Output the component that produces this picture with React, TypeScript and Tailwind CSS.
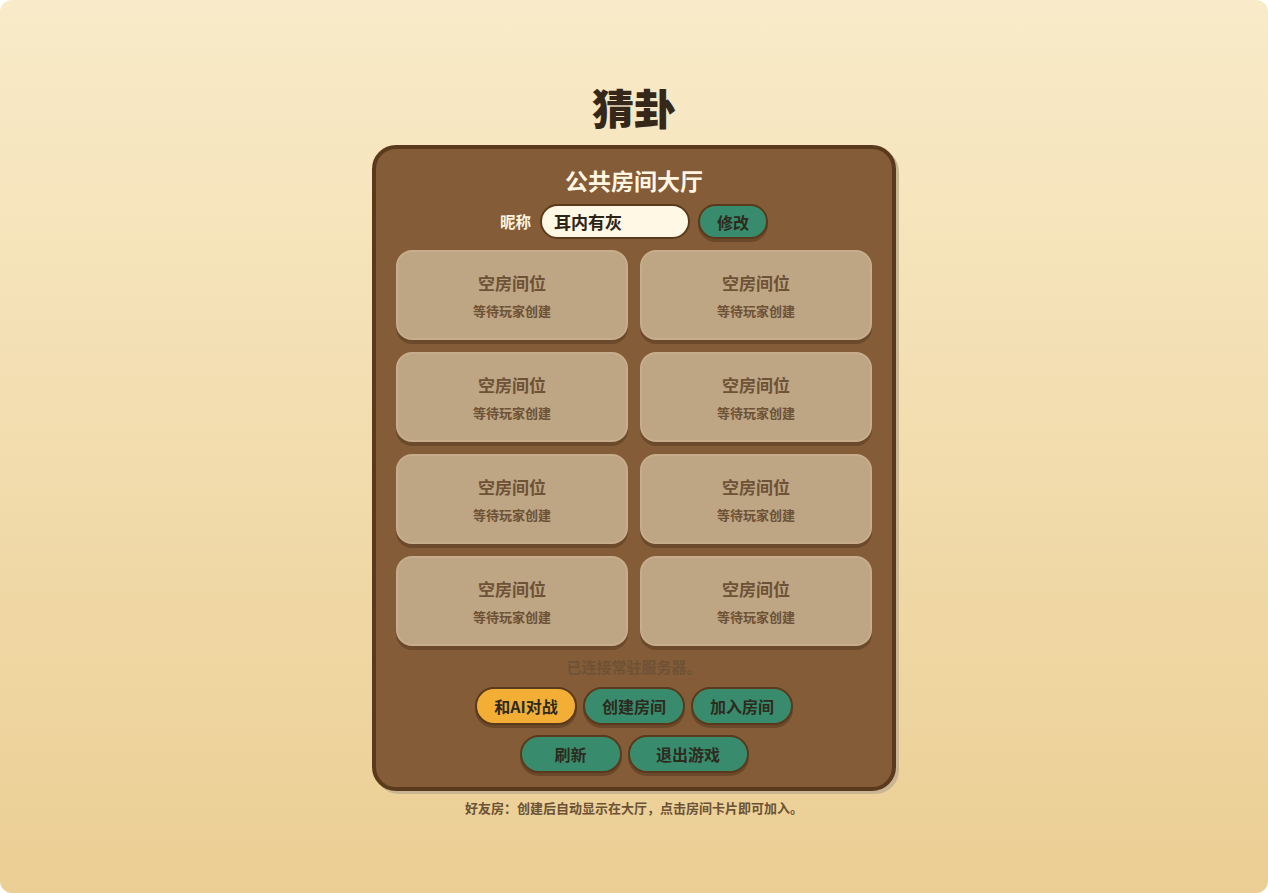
import React from "react";

const font = { fontFamily: '"Noto Sans CJK SC", "Noto Sans", sans-serif' };

function Btn({ children, yellow, w }: { children: React.ReactNode; yellow?: boolean; w: string }) {
  return (
    <button
      className={`${w} h-[38px] rounded-full border-2 border-[#5a3a1c] text-[16px] font-bold text-[#2d2a1e] shadow-[0_3px_0_#6a4829] ${
        yellow ? "bg-[#f3ae36]" : "bg-[#388c6d]"
      }`}
    >
      {children}
    </button>
  );
}

function Card() {
  return (
    <div className="h-[90px] rounded-[16px] border-2 border-[#c7ad8b] bg-[#bea584] shadow-[0_4px_0_#6b4a2b] flex flex-col items-center justify-center">
      <div className="text-[17px] leading-[24px] font-bold text-[#6d5236]">空房间位</div>
      <div className="mt-[7px] text-[13px] leading-[17px] font-bold text-[#6d5236]">等待玩家创建</div>
    </div>
  );
}

export default function App() {
  return (
    <div className="bg-white" style={font}>
      <div className="h-[893px] w-full rounded-[12px] bg-gradient-to-b from-[#f9ebc9] to-[#ebce93] flex flex-col items-center pt-[82px]">
        <h1 className="text-[42px] leading-[50px] font-black text-[#35281b]">猜卦</h1>
        <div className="mt-[13px] w-[524px] rounded-[24px] border-4 border-[#5a3a1c] bg-[#845c38] shadow-[3px_3px_0_#c9b592] px-5 pt-4 pb-[14px] flex flex-col items-center">
          <div className="text-[23px] leading-[30px] font-bold text-[#fff6e2]">公共房间大厅</div>
          <div className="mt-[9px] flex items-center">
            <span className="text-[15.5px] font-bold text-[#fff3dc] mr-[9px]">昵称</span>
            <div className="w-[150px] h-[35px] rounded-full border-2 border-[#5a3a1c] bg-[#fff8e4] flex items-center px-3 text-[17px] font-bold text-[#2d2418]">
              耳内有灰
            </div>
            <button className="ml-[8px] w-[70px] h-[35px] rounded-full border-2 border-[#5a3a1c] bg-[#388c6d] text-[16px] font-bold text-[#2d2a1e] shadow-[0_3px_0_#6a4829]">
              修改
            </button>
          </div>
          <div className="mt-[11px] grid grid-cols-2 gap-3 w-full">
            {Array.from({ length: 8 }).map((_, i) => (
              <Card key={i} />
            ))}
          </div>
          <div className="mt-[11px] text-[15px] leading-[20px] font-bold text-[#6e5236]">已连接常驻服务器。</div>
          <div className="mt-[10px] flex gap-[6px]">
            <Btn yellow w="w-[102px]">和AI对战</Btn>
            <Btn w="w-[102px]">创建房间</Btn>
            <Btn w="w-[102px]">加入房间</Btn>
          </div>
          <div className="mt-[10px] flex gap-[6px]">
            <Btn w="w-[102px]">刷新</Btn>
            <Btn w="w-[121px]">退出游戏</Btn>
          </div>
        </div>
        <div className="mt-[8px] text-[13px] leading-[18px] font-bold text-[#6b5236]">
          好友房：创建后自动显示在大厅，点击房间卡片即可加入。
        </div>
      </div>
    </div>
  );
}
